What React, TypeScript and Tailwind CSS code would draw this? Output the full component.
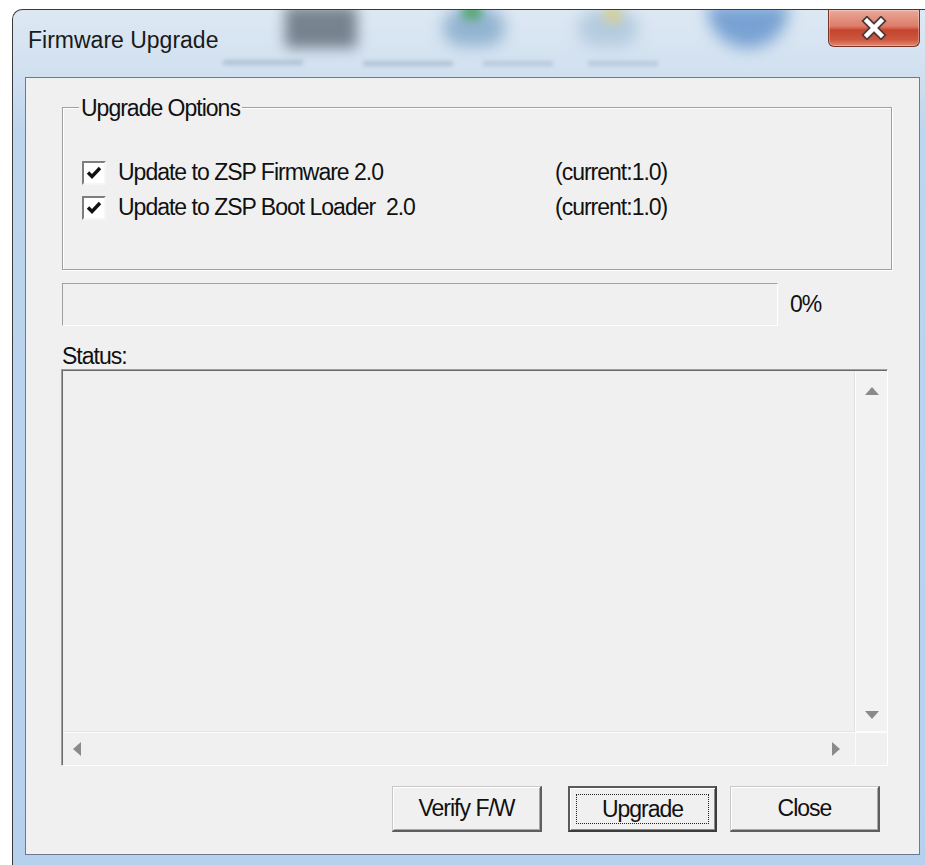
import React from 'react';

// Classic Win32 checkbox, checked
const CheckBox = () => (
    <span className="w-[24px] h-[24px] shrink-0 border-2 border-t-[#7e7e7e] border-l-[#7e7e7e] border-r-[#f6f6f6] border-b-[#f6f6f6] bg-white flex items-center justify-center">
        <svg width="18" height="18" viewBox="0 0 18 18">
            <path d="M3 8.5 L7 12.5 L15 4" fill="none" stroke="#111" strokeWidth="3.4" />
        </svg>
    </span>
);

interface BtnProps {
    label: string;
    isDefault?: boolean;
    className?: string;
}

const DialogButton: React.FC<BtnProps> = ({ label, isDefault, className }) => (
    isDefault ? (
        <button className={`h-[46px] p-[6px] bg-[#f0f0f0] border-2 border-t-[#5a5a5a] border-l-[#5a5a5a] border-b-[#3c3c3c] border-r-[#3c3c3c] shadow-[inset_1px_1px_0_#fff,inset_-1px_-1px_0_#8a8a8a] ${className ?? ''}`}>
            <span className="w-full h-full flex items-center justify-center border border-dotted border-[#222]">
                {label}
            </span>
        </button>
    ) : (
        <button className={`h-[46px] flex items-center justify-center bg-[#f0f0f0] border border-t-[#c8c8c8] border-l-[#c8c8c8] border-b-2 border-r-2 border-b-[#5e5e5e] border-r-[#5e5e5e] shadow-[inset_1px_1px_0_#fff,inset_-1px_-1px_0_#a8a8a8] ${className ?? ''}`}>
            {label}
        </button>
    )
);

const options = [
    { label: 'Update to ZSP Firmware 2.0', current: '(current:1.0)' },
    { label: 'Update to ZSP Boot Loader\u00a0 2.0', current: '(current:1.0)' },
];

const App: React.FC = () => {
    return (
        <div className="w-[925px] h-[865px] bg-white overflow-hidden font-['Liberation_Sans',Arial,sans-serif] text-[#111]">
            {/* Aero window frame */}
            <div className="ml-[12px] mt-[9px] w-[921px] h-[870px] rounded-tl-[10px] border-l border-t border-[#3a3a3a] bg-[linear-gradient(180deg,#dde8f3_0px,#d2e1f0_60px,#bdd5ee_120px,#b6d1ee_100%)] flex flex-col relative overflow-hidden">
                {/* Title bar */}
                <div className="relative h-[67px] flex items-start shrink-0">
                    {/* blurred desktop behind the glass */}
                    <div className="absolute left-[272px] -top-[4px] w-[72px] h-[42px] rounded-[4px] bg-[#56626e] blur-[7px] opacity-75" />
                    <div className="absolute left-[430px] -top-[2px] w-[62px] h-[38px] rounded-full bg-[#7aa3c6] blur-[8px] opacity-75" />
                    <div className="absolute left-[448px] -top-[6px] w-[22px] h-[16px] rounded-full bg-[#3f9f55] blur-[5px] opacity-75" />
                    <div className="absolute left-[565px] top-[0px] w-[60px] h-[36px] rounded-full bg-[#a8c2d8] blur-[8px] opacity-75" />
                    <div className="absolute left-[590px] -top-[4px] w-[20px] h-[18px] rounded-full bg-[#d9cf8a] blur-[5px] opacity-75" />
                    <div className="absolute left-[694px] -top-[6px] w-[82px] h-[44px] rounded-b-full bg-[#4f86c6] blur-[8px] opacity-70" />
                    <div className="absolute left-[210px] top-[50px] w-[80px] h-[5px] bg-[#8ea3b8] blur-[2px] opacity-50" />
                    <div className="absolute left-[350px] top-[51px] w-[90px] h-[5px] bg-[#8ea3b8] blur-[2px] opacity-50" />
                    <div className="absolute left-[470px] top-[51px] w-[70px] h-[5px] bg-[#8ea3b8] blur-[2px] opacity-40" />
                    <div className="absolute left-[575px] top-[51px] w-[70px] h-[5px] bg-[#8ea3b8] blur-[2px] opacity-40" />

                    <span className="relative pl-[15px] pt-[15px] text-[23px] leading-[30px] text-[#1a1a1a]">Firmware Upgrade</span>

                    {/* close button */}
                    <div className="relative ml-auto mr-[13px] w-[92px] h-[37px] rounded-b-[6px] border border-t-0 border-[#7a3328] bg-[linear-gradient(180deg,#eaa99b_0%,#dd7c69_45%,#c4452f_56%,#cd563e_82%,#e08a70_100%)] shadow-[inset_0_0_0_1px_rgba(255,255,255,0.3)] flex items-center justify-center">
                        <svg width="28" height="24" viewBox="0 0 28 24">
                            <path d="M7 5 L21 19 M21 5 L7 19" stroke="#4d3a3a" strokeWidth="8" strokeLinecap="square" />
                            <path d="M7 5 L21 19 M21 5 L7 19" stroke="#fff" strokeWidth="4.5" strokeLinecap="square" />
                        </svg>
                    </div>
                </div>

                {/* Client area */}
                <div className="ml-[12px] w-[895px] h-[778px] shrink-0 border border-[#6b7a8c] bg-[#f0f0f0] flex flex-col text-[23px] tracking-[-1px]">
                    {/* Upgrade Options group */}
                    <div className="relative mt-[29px] ml-[36px] w-[830px] h-[163px] border border-[#a0a0a0] shadow-[inset_1px_1px_0_#fff,1px_1px_0_#fff] pt-[47px] pl-[19px]">
                        <span className="absolute -top-[13px] left-[16px] px-[2px] bg-[#f0f0f0] leading-[26px]">Upgrade Options</span>
                        {options.map(o => (
                            <div key={o.label} className="flex items-center h-[35px]">
                                <CheckBox />
                                <span className="ml-[12px] w-[437px] whitespace-pre">{o.label}</span>
                                <span>{o.current}</span>
                            </div>
                        ))}
                    </div>

                    {/* Progress */}
                    <div className="mt-[13px] ml-[36px] flex items-center">
                        <div className="w-[716px] h-[43px] border border-t-[#a0a0a0] border-l-[#a0a0a0] border-b-white border-r-white" />
                        <span className="ml-[12px]">0%</span>
                    </div>

                    <span className="mt-[17px] ml-[36px] leading-[26px]">Status:</span>

                    {/* Status list box */}
                    <div className="ml-[35px] w-[827px] h-[397px] border border-t-[#a0a0a0] border-l-[#a0a0a0] border-b-white border-r-white shadow-[inset_1px_1px_0_#6a6a6a] flex flex-col">
                        <div className="flex-1 flex pt-[1px] pl-[1px]">
                            <div className="flex-1" />
                            <div className="w-[32px] flex flex-col justify-between border-l border-b border-[#fcfcfc] shadow-[-1px_0_0_#e2e2e2] bg-[#f2f2f2]">
                                <div className="h-[40px] flex items-center justify-center">
                                    <svg width="14" height="8" viewBox="0 0 14 8"><path d="M7 0 L14 8 L0 8 Z" fill="#8a8a8a" /></svg>
                                </div>
                                <div className="h-[32px] flex items-center justify-center">
                                    <svg width="14" height="8" viewBox="0 0 14 8"><path d="M0 0 L14 0 L7 8 Z" fill="#8a8a8a" /></svg>
                                </div>
                            </div>
                        </div>
                        <div className="h-[33px] flex pl-[1px]">
                            <div className="flex-1 flex items-center justify-between pl-[10px] pr-[15px] border-t border-[#fcfcfc] shadow-[0_-1px_0_#e4e4e4]">
                                <svg width="8" height="14" viewBox="0 0 8 14"><path d="M8 0 L8 14 L0 7 Z" fill="#8a8a8a" /></svg>
                                <svg width="8" height="14" viewBox="0 0 8 14"><path d="M0 0 L8 7 L0 14 Z" fill="#8a8a8a" /></svg>
                            </div>
                            <div className="w-[32px] border-l border-t border-[#fcfcfc]" />
                        </div>
                    </div>

                    {/* Buttons */}
                    <div className="mt-[20px] flex">
                        <DialogButton label="Verify F/W" className="ml-[366px] w-[150px]" />
                        <DialogButton label="Upgrade" isDefault className="ml-[26px] w-[149px]" />
                        <DialogButton label="Close" className="ml-[13px] w-[150px]" />
                    </div>
                </div>
            </div>
        </div>
    );
};

export default App;
